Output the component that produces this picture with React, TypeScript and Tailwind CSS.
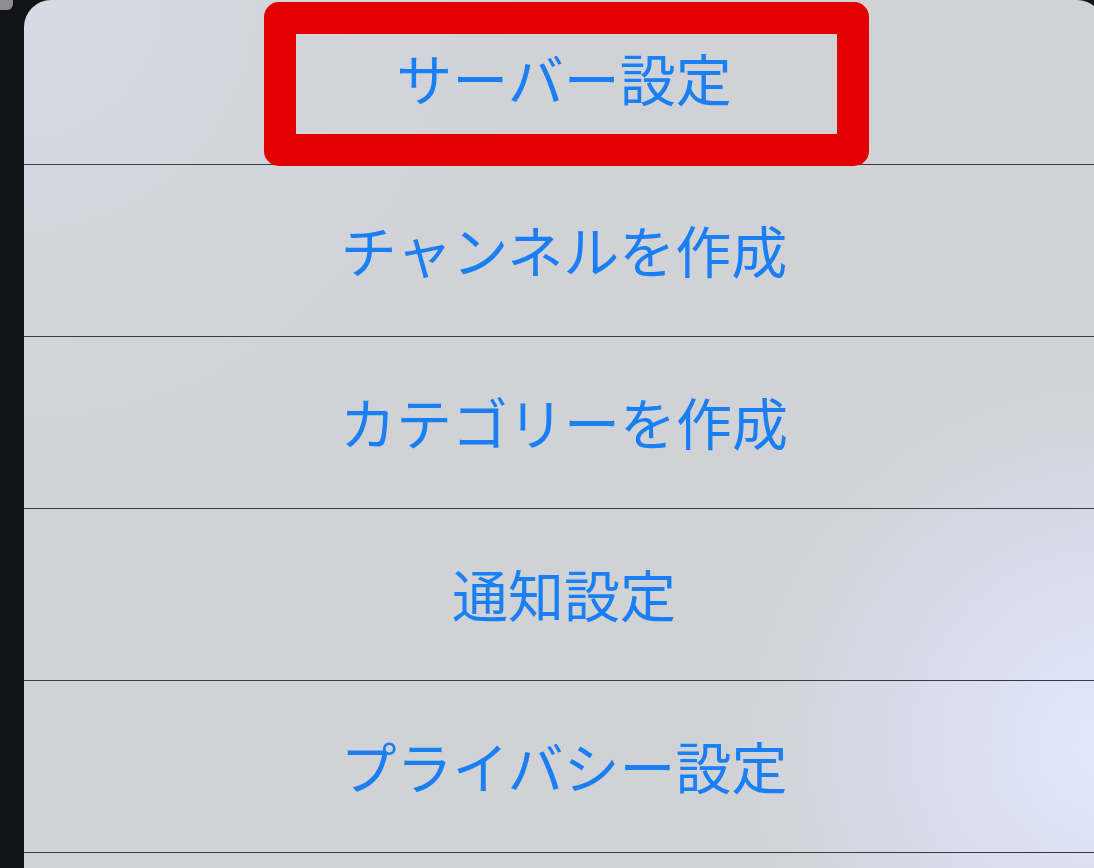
import React from 'react'

const items = ['チャンネルを作成', 'カテゴリーを作成', '通知設定', 'プライバシー設定']

const font = { fontFamily: '"Noto Sans CJK JP", "Noto Sans", sans-serif' }

export default function App() {
  return (
    <div className="flex h-[868px] w-[1094px] overflow-hidden bg-[#121315]" style={font}>
      {/* left edge of the screen behind the sheet */}
      <div className="w-[24px] shrink-0">
        <div className="h-[10px] w-[13px] rounded-br-[6px] bg-[#8d8d8f]" />
      </div>

      <div className="relative w-[1080px] shrink-0 overflow-hidden rounded-t-[27px] bg-[#d1d2d6] bg-[radial-gradient(circle_380px_at_1085px_745px,#e2e8ff_0%,rgba(222,229,253,0.7)_35%,rgba(209,210,214,0)_100%),radial-gradient(circle_500px_at_0px_0px,#d6dae4_0%,rgba(209,210,214,0)_100%)]">
        <div className="flex h-[164px] items-center justify-center pb-[10px]">
          <span className="text-[56px] font-normal leading-none text-[#1b7ff4]">サーバー設定</span>
        </div>
        {items.map((label) => (
          <div
            key={label}
            className="flex h-[172px] items-center justify-center border-t border-[#3a3b40] pb-[4px]"
          >
            <span className="text-[56px] font-normal leading-none text-[#1b7ff4]">{label}</span>
          </div>
        ))}
        <div className="h-[20px] border-t border-[#3a3b40]" />

        {/* highlight around the first item */}
        <div className="absolute left-[240px] top-[2px] h-[164px] w-[605px] rounded-[15px] border-[32px] border-[#e20000]" />
      </div>
    </div>
  )
}
